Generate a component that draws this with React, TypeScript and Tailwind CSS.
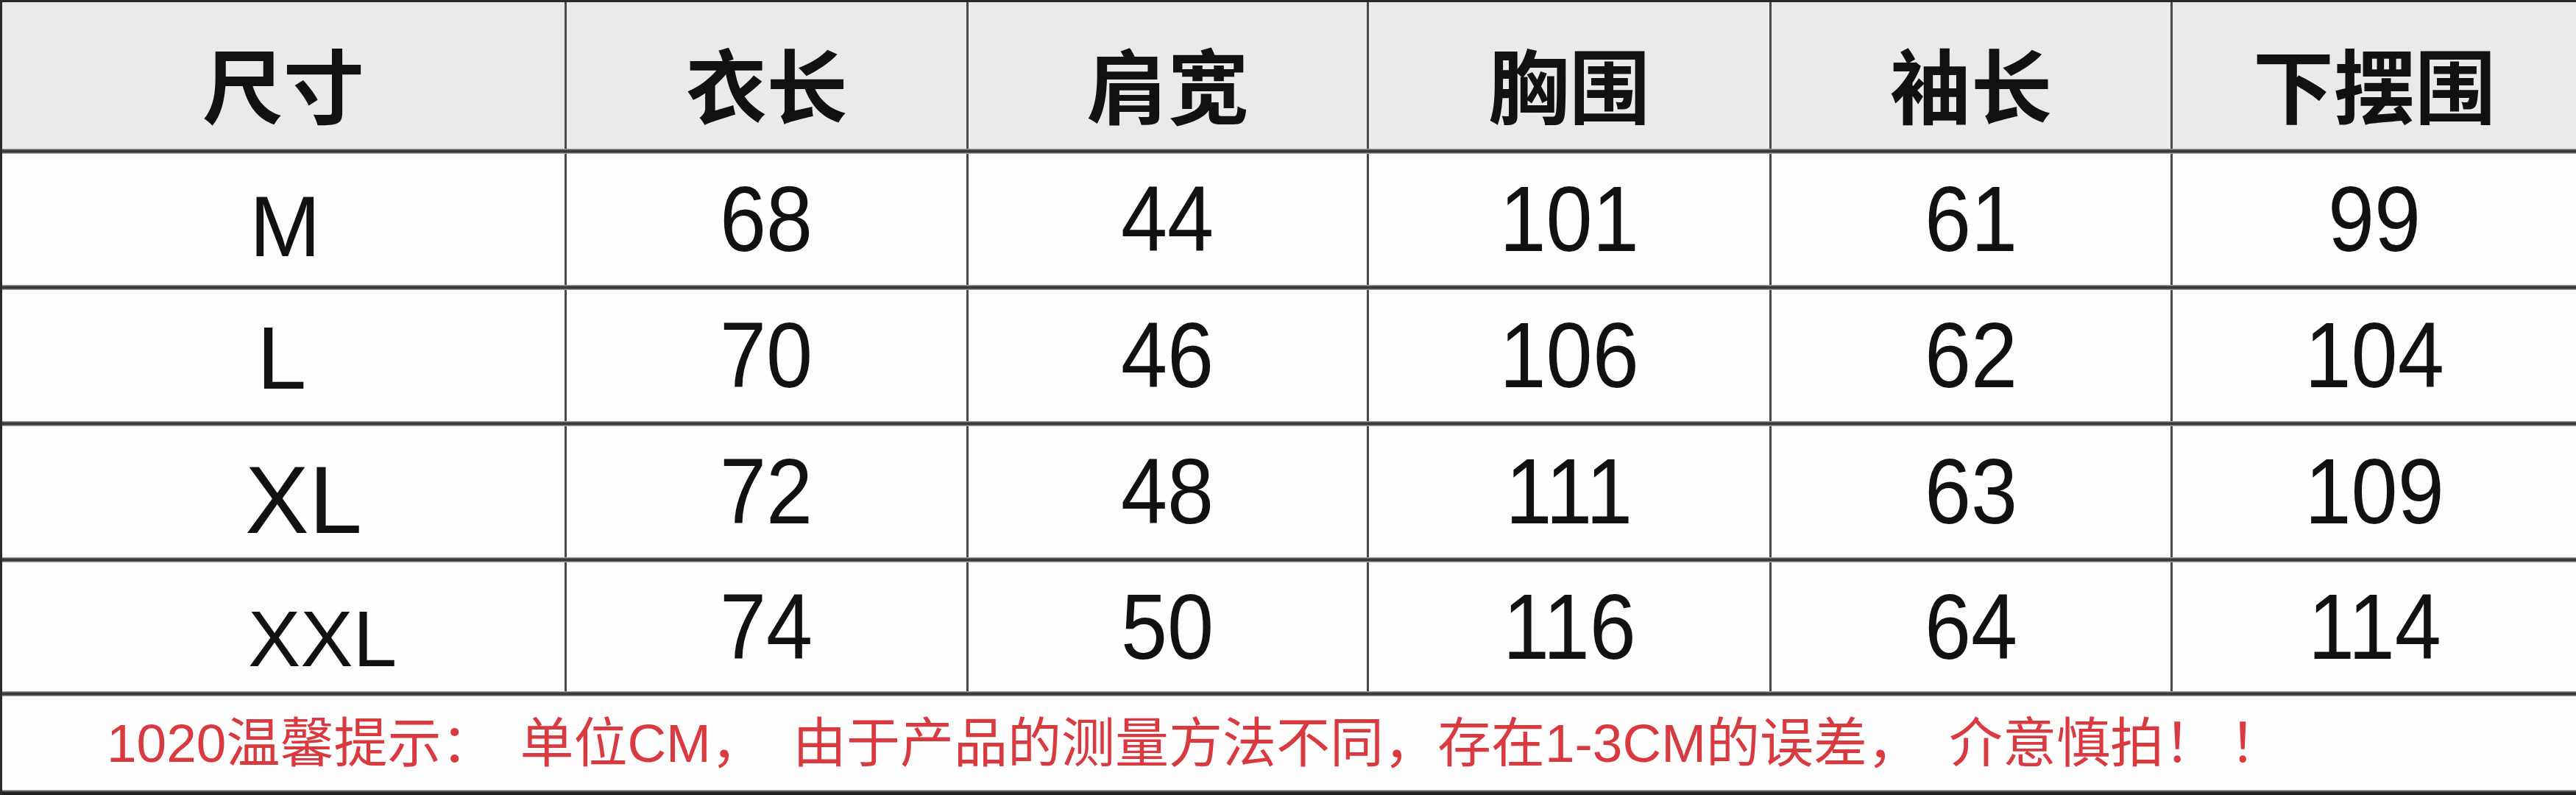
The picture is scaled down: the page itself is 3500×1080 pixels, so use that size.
import React from "react";

const headers = ["尺寸", "衣长", "肩宽", "胸围", "袖长", "下摆围"];

type Row = {
  size: string;
  sizeClass: string;
  vals: string[];
  h: string;
};

const rows: Row[] = [
  { size: "M", sizeClass: "text-[116px] pl-[336px] pt-[20px]", vals: ["68", "44", "101", "61", "99"], h: "h-[178px]" },
  { size: "L", sizeClass: "text-[121px] pl-[346px] pt-[6px]", vals: ["70", "46", "106", "62", "104"], h: "h-[178px]" },
  { size: "XL", sizeClass: "text-[130px] pl-[330px] pt-[22px]", vals: ["72", "48", "111", "63", "109"], h: "h-[178px]" },
  { size: "XXL", sizeClass: "text-[107px] pl-[334px] pt-[34px]", vals: ["74", "50", "116", "64", "114"], h: "h-[175px]" },
];

const gridCols = "grid grid-cols-[764px_546px_544px_547px_545px_1fr]";

function Sep() {
  return <div className="h-[7px] w-full bg-[linear-gradient(#bdbdbd,#3a3a3a_30%,#3a3a3a_70%,#c4c4c4)]" />;
}

export default function App() {
  return (
    <div className="w-[3500px] h-[1080px] bg-[#fdfdfd] border-t-[3px] border-l-[3px] border-[#2a2a2a] flex flex-col overflow-hidden">
      {/* header */}
      <div className={`${gridCols} h-[199px] bg-[#eaeaea]`}>
        {headers.map((h, i) => (
          <div
            key={h}
            className={`flex items-center justify-center pt-[18px] ${i > 0 ? "border-l-[3px] border-[#4a4a4a]" : ""}`}
          >
            <span className="text-[110px] leading-none font-bold text-[#111] [font-family:'Noto_Sans_CJK_SC',sans-serif]">
              {h}
            </span>
          </div>
        ))}
      </div>
      <Sep />
      {rows.map((r) => (
        <React.Fragment key={r.size}>
          <div className={`${gridCols} ${r.h} bg-[#fdfdfd]`}>
            <div className={`flex items-center ${r.sizeClass} leading-none text-[#111] [font-family:'Liberation_Sans',sans-serif]`}>
              <span>{r.size}</span>
            </div>
            {r.vals.map((v, i) => (
              <div key={i} className="flex items-center justify-center border-l-[3px] border-[#4a4a4a]">
                <span className="inline-block scale-x-[0.9] text-[126px] leading-none text-[#111] [font-family:'Liberation_Sans',sans-serif]">
                  {v}
                </span>
              </div>
            ))}
          </div>
          <Sep />
        </React.Fragment>
      ))}
      {/* footer */}
      <div className="h-[127px] flex items-center pl-[142px] bg-[#fdfdfd]">
        <span className="text-[73px] leading-none whitespace-pre text-[#d93a40] [font-family:'Liberation_Sans','Noto_Sans_CJK_SC',sans-serif]">
          1020温馨提示：<span className="ml-[34px]">单位CM，</span>
          <span className="ml-[38px]">由于产品的测量方法不同，存在1-3CM的误差，</span>
          <span className="ml-[38px]">介意慎拍！</span>
          <span className="ml-[16px]">！</span>
        </span>
      </div>
      <div className="h-[7px] w-full bg-[linear-gradient(#c4c4c4,#2a2a2a_40%,#1a1a1a)]" />
    </div>
  );
}
